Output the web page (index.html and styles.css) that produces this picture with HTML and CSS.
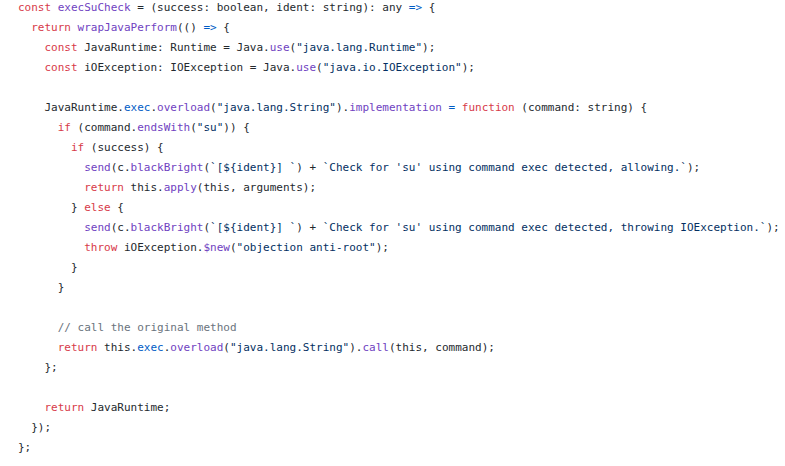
FILE: index.html
```html
<!DOCTYPE html>
<html>
<head>
<meta charset="utf-8">
<link rel="stylesheet" href="styles.css">
</head>
<body>
<div class="code">
<div class="line"><span class="k">const</span> <span class="f">execSuCheck</span> = (success: boolean, ident: string): any <span class="o">=&gt;</span> {</div>
<div class="line i1"><span class="k">return</span> <span class="f">wrapJavaPerform</span>(() <span class="o">=&gt;</span> {</div>
<div class="line i2"><span class="k">const</span> JavaRuntime: Runtime = Java.<span class="f">use</span>(<span class="s">"java.lang.Runtime"</span>);</div>
<div class="line i2"><span class="k">const</span> iOException: IOException = Java.<span class="f">use</span>(<span class="s">"java.io.IOException"</span>);</div>
<div class="line"></div>
<div class="line i2">JavaRuntime.<span class="p">exec</span>.<span class="f">overload</span>(<span class="s">"java.lang.String"</span>).<span class="f">implementation</span> <span class="o">=</span> <span class="k">function</span> (command: string) {</div>
<div class="line i3"><span class="k">if</span> (command.<span class="f">endsWith</span>(<span class="s">"su"</span>)) {</div>
<div class="line i4"><span class="k">if</span> (success) {</div>
<div class="line i5"><span class="f">send</span>(c.<span class="f">blackBright</span>(<span class="s">`[${ident}] `</span>) + <span class="s">`Check for 'su' using command exec detected, allowing.`</span>);</div>
<div class="line i5"><span class="k">return</span> this.<span class="f">apply</span>(this, arguments);</div>
<div class="line i4">} <span class="k">else</span> {</div>
<div class="line i5"><span class="f">send</span>(c.<span class="f">blackBright</span>(<span class="s">`[${ident}] `</span>) + <span class="s">`Check for 'su' using command exec detected, throwing IOException.`</span>);</div>
<div class="line i5"><span class="k">throw</span> iOException.<span class="f">$new</span>(<span class="s">"objection anti-root"</span>);</div>
<div class="line i4">}</div>
<div class="line i3">}</div>
<div class="line"></div>
<div class="line i3"><span class="c">// call the original method</span></div>
<div class="line i3"><span class="k">return</span> this.<span class="p">exec</span>.<span class="f">overload</span>(<span class="s">"java.lang.String"</span>).<span class="f">call</span>(this, command);</div>
<div class="line i2">};</div>
<div class="line"></div>
<div class="line i2"><span class="k">return</span> JavaRuntime;</div>
<div class="line i1">});</div>
<div class="line">};</div>
</div>
</body>
</html>
```
FILE: styles.css
```css
html, body {
  margin: 0;
  padding: 0;
  background: #ffffff;
}

.code {
  display: flex;
  flex-direction: column;
  margin-top: -2px;
  padding-left: 18px;
  font-family: "DejaVu Sans Mono", "Liberation Mono", monospace;
  font-size: 11px;
  line-height: 20px;
  color: #24292e;
}

.line {
  height: 20px;
  white-space: pre;
}

.i1 { padding-left: 2ch; }
.i2 { padding-left: 4ch; }
.i3 { padding-left: 6ch; }
.i4 { padding-left: 8ch; }
.i5 { padding-left: 10ch; }

.k { color: #d73a49; }
.f { color: #6f42c1; }
.p { color: #005cc5; }
.o { color: #005cc5; }
.s { color: #032f62; }
.c { color: #6a737d; }
```
